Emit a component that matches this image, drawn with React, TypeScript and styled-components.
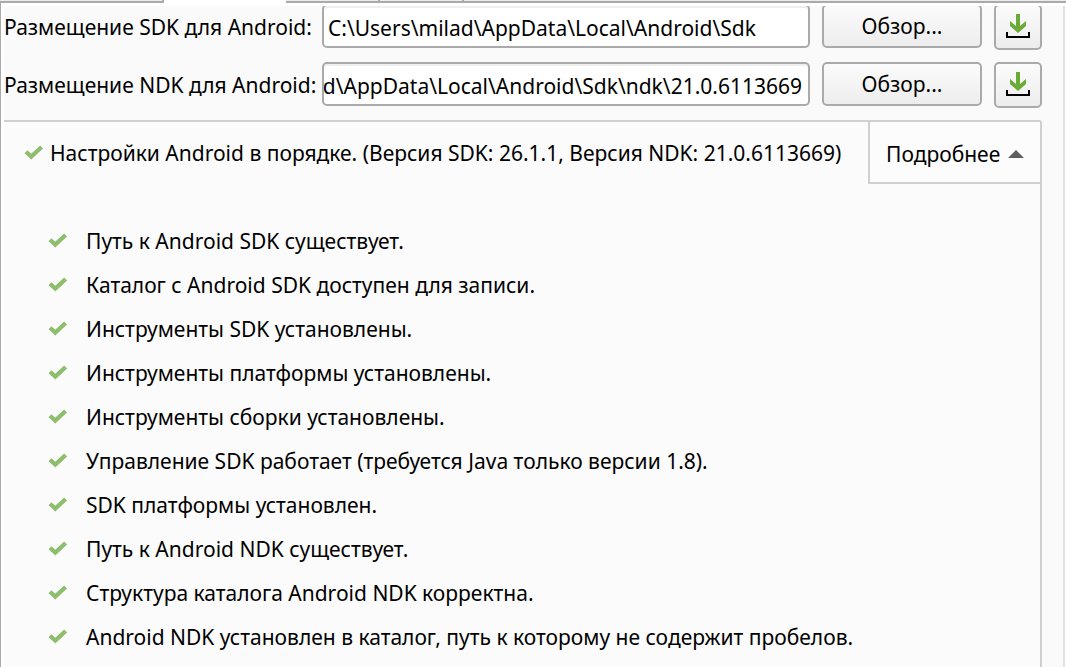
import React, { useEffect, useRef, useState } from "react";
import styled, { createGlobalStyle } from "styled-components";

const GlobalStyle = createGlobalStyle`
  * { box-sizing: border-box; }
  body {
    margin: 0;
    background: #fafafa;
    color: #000;
    font-family: "Noto Sans", "DejaVu Sans Condensed", sans-serif;
    font-size: 21px;
    line-height: 28px;
  }
`;

const Page = styled.main`
  display: flex;
  flex-direction: column;
  height: 100vh;
  overflow: hidden;
`;

const TabStrip = styled.div`
  display: grid;
  grid-template-columns: 164px 122px 94px 84px 1fr;
  flex: none;
  height: 3px;
`;

const TabEdge = styled.div<{ $active?: boolean; $divided?: boolean }>`
  background: ${(p) => (p.$active ? "#fff" : "#ececec")};
  border-bottom: 2px solid ${(p) => (p.$active ? "#fff" : "#aaa")};
  border-right: ${(p) => (p.$divided ? "2px solid #aaa" : "none")};
`;

const Pane = styled.div`
  display: flex;
  flex: 1;
  min-height: 0;
  padding: 3px 1px 0 3px;
  border-left: 1px solid #aaa;
  background: #fff;
`;

const ScrollArea = styled.div`
  display: flex;
  flex: 1;
  flex-direction: column;
  min-width: 0;
  overflow: hidden;
  padding-right: 21px;
  background: #fafafa;
  border-right: 2px solid #e0e0e0;
`;

const PathForm = styled.form`
  display: grid;
  grid-template-columns: 306px 1fr 160px 48px;
  flex: none;
  gap: 12px;
  margin-top: -2px;
`;

const Label = styled.label`
  padding-top: 9px;
  text-align: right;
  white-space: nowrap;
`;

const Field = styled.input`
  width: 100%;
  min-width: 0;
  height: 44px;
  padding: 3px 6px 0 0;
  border: 2px solid #aaa;
  border-radius: 5px;
  background: #fff;
  box-shadow: inset 0 2px 0 #efefef;
  color: inherit;
  font: inherit;
  text-indent: 4px;
  outline: none;
`;

const PushButton = styled.button<{ $tall?: boolean }>`
  display: flex;
  align-items: center;
  justify-content: center;
  height: ${(p) => (p.$tall ? 46 : 44)}px;
  padding: 0;
  border: 2px solid #aaa;
  border-radius: 5px;
  background: linear-gradient(#fbfbfb, #ededed);
  color: inherit;
  font: inherit;
`;

const Summary = styled.section`
  flex: 1;
  margin-top: 12px;
  border-top: 2px solid #d0d0d0;
  border-right: 2px solid #d0d0d0;
  border-top-right-radius: 3px;
  background: #fbfbfb;
`;

const SummaryHeader = styled.header`
  display: flex;
  align-items: flex-start;
  justify-content: space-between;
`;

const Status = styled.h1`
  display: flex;
  align-items: center;
  gap: 6px;
  margin: 0;
  padding: 17px 0 0 20px;
  font-size: inherit;
  font-weight: normal;
  white-space: nowrap;
`;

const DetailsButton = styled.button`
  display: flex;
  align-items: center;
  gap: 8px;
  flex: none;
  width: 172px;
  height: 62px;
  padding: 3px 0 0 16px;
  border: solid #d0d0d0;
  border-width: 0 0 2px 2px;
  background: #fcfcfc;
  color: inherit;
  font: inherit;
`;

const CheckList = styled.ul`
  margin: 0;
  padding: 35px 0 0 44px;
  list-style: none;
`;

const CheckItem = styled.li`
  display: flex;
  align-items: center;
  gap: 18px;
  height: 44px;
  white-space: nowrap;
`;

const CheckMark = () => (
  <svg width="20" height="16" viewBox="0 0 20 16" aria-hidden="true">
    <path d="M2 6.8 7.3 11.6 17.6 2" fill="none" stroke="#8dbe6c" strokeWidth="4.2" />
  </svg>
);

const DownloadIcon = () => (
  <svg width="24" height="26" viewBox="0 0 24 26" aria-hidden="true">
    <path d="M10 0h4v12l6-5v5l-8 7-8-7V7l6 5z" fill="#6aab35" />
    <path d="M1 18v5h22v-5" fill="none" stroke="#000" strokeWidth="2" />
  </svg>
);

const Arrow = ({ open }: { open: boolean }) => (
  <svg width="16" height="8" viewBox="0 0 16 8" aria-hidden="true">
    <path d={open ? "M0 8 8 0 16 8z" : "M0 0 8 8 16 0z"} fill="#5e5e5e" />
  </svg>
);

type PathRowProps = { id: string; label: string; path: string };

function PathRow({ id, label, path }: PathRowProps) {
  const field = useRef<HTMLInputElement>(null);
  const [value, setValue] = useState(path);

  // A long path shows its tail, where the version number is.
  useEffect(() => {
    if (field.current) field.current.scrollLeft = field.current.scrollWidth;
  }, []);

  return (
    <>
      <Label htmlFor={id}>{label}</Label>
      <Field id={id} ref={field} value={value} spellCheck={false} onChange={(e) => setValue(e.target.value)} />
      <PushButton type="button">Обзор...</PushButton>
      <PushButton type="button" $tall aria-label="Загрузить">
        <DownloadIcon />
      </PushButton>
    </>
  );
}

const checks = [
  "Путь к Android SDK существует.",
  "Каталог с Android SDK доступен для записи.",
  "Инструменты SDK установлены.",
  "Инструменты платформы установлены.",
  "Инструменты сборки установлены.",
  "Управление SDK работает (требуется Java только версии 1.8).",
  "SDK платформы установлен.",
  "Путь к Android NDK существует.",
  "Структура каталога Android NDK корректна.",
  "Android NDK установлен в каталог, путь к которому не содержит пробелов.",
];

export default function App() {
  const [open, setOpen] = useState(true);
  return (
    <Page>
      <GlobalStyle />
      <TabStrip>
        <TabEdge $divided />
        <TabEdge $active />
        <TabEdge $divided />
        <TabEdge $divided />
        <TabEdge />
      </TabStrip>
      <Pane>
        <ScrollArea>
          <PathForm>
            <PathRow id="sdk" label="Размещение SDK для Android:" path={"C:\\Users\\milad\\AppData\\Local\\Android\\Sdk"} />
            <PathRow
              id="ndk"
              label="Размещение NDK для Android:"
              path={"C:\\Users\\milad\\AppData\\Local\\Android\\Sdk\\ndk\\21.0.6113669"}
            />
          </PathForm>
          <Summary>
            <SummaryHeader>
              <Status>
                <CheckMark />
                Настройки Android в порядке. (Версия SDK: 26.1.1, Версия NDK: 21.0.6113669)
              </Status>
              <DetailsButton type="button" aria-expanded={open} onClick={() => setOpen(!open)}>
                Подробнее
                <Arrow open={open} />
              </DetailsButton>
            </SummaryHeader>
            {open && (
              <CheckList>
                {checks.map((text) => (
                  <CheckItem key={text}>
                    <CheckMark />
                    {text}
                  </CheckItem>
                ))}
              </CheckList>
            )}
          </Summary>
        </ScrollArea>
      </Pane>
    </Page>
  );
}
